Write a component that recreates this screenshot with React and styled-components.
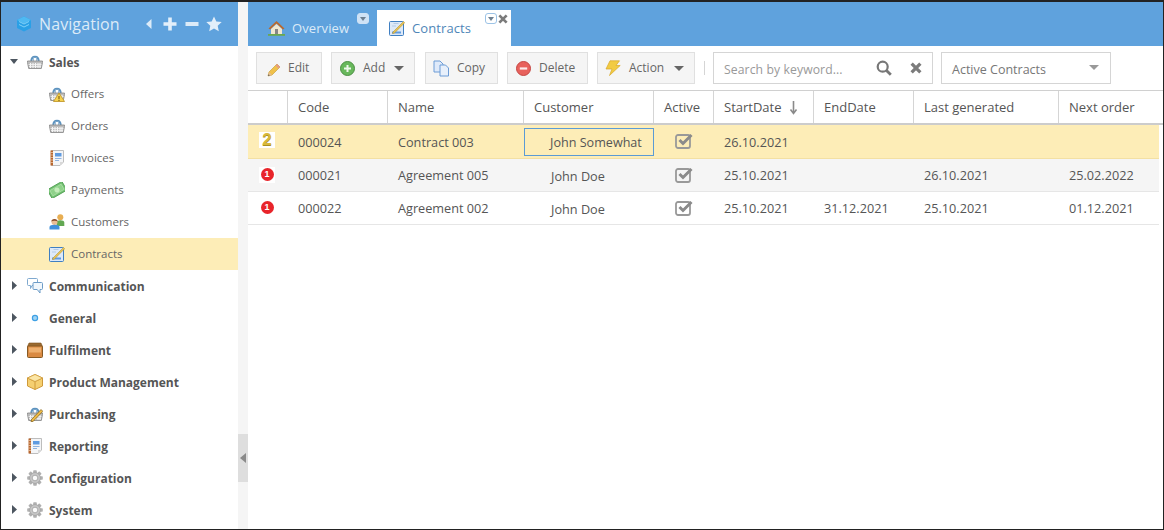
import React from "react";
import styled, { createGlobalStyle } from "styled-components";

const Global = createGlobalStyle`
  html, body { margin: 0; padding: 0; background: #fff; }
  * { box-sizing: border-box; }
  body { font-family: "Open Sans", "Liberation Sans", sans-serif; font-size: 13px; color: #555; }
`;

const Frame = styled.div`
  width: 1164px; height: 530px; display: flex; overflow: hidden;
  border: 1px solid #222; border-top-width: 2px; background: #fff;
`;
const Sidebar = styled.aside`width: 237px; flex: none; display: flex; flex-direction: column;`;
const NavHeader = styled.header`
  height: 44px; background: #5fa2dd; display: flex; align-items: center; padding-left: 15px;
`;
const NavTitle = styled.div`
  font-size: 16px; color: #dcebf8; margin-left: 7px; width: 106px; letter-spacing: .1px;
`;
const NavTools = styled.div`display: flex; align-items: center;`;
const NavTool = styled.span`display: flex; margin-right: ${p => p.$mr}px;`;
const NavList = styled.nav`display: flex; flex-direction: column;`;
const Item = styled.div`
  height: 32px; display: flex; align-items: center; flex: none;
  padding-left: ${p => (p.$child ? 48 : 9)}px;
  background: ${p => (p.$active ? "#fdedb7" : "transparent")};
  font-weight: ${p => (p.$child ? 400 : 700)};
  color: ${p => (p.$child ? "#666" : "#555")};
  font-size: ${p => (p.$child ? 11.5 : 12)}px;
`;
const ItemLabel = styled.span`margin-top: ${p => (p.$child ? -1 : 0)}px;`;
const Toggle = styled.span`
  width: 17px; flex: none; display: flex; justify-content: ${p => (p.$open ? "flex-start" : "center")};
  padding-right: ${p => (p.$open ? 0 : 8)}px; margin-top: -1px;
`;
const IconSlot = styled.span`width: 16px; height: 16px; flex: none; display: flex; margin-right: 6px;`;
const Gutter = styled.div`
  width: 10px; flex: none; background: #f5f5f5; display: flex; flex-direction: column; justify-content: flex-end; padding-bottom: 47px;
`;
const Handle = styled.div`
  height: 48px; background: #dedede; display: flex; align-items: center; justify-content: center;
`;
const Main = styled.main`flex: 1; min-width: 0; display: flex; flex-direction: column;`;
const TabBar = styled.div`
  height: 44px; background: #5fa2dd; display: flex; align-items: flex-end; padding-left: 5px;
`;
const Tab = styled.div`
  position: relative; height: 36px; display: flex; align-items: center; flex: none;
  width: ${p => p.$w}px; padding-left: ${p => p.$pad}px;
  background: ${p => (p.$active ? "#fff" : "transparent")};
  color: ${p => (p.$active ? "#4f86b8" : "#dcebf8")};
  font-size: 13px; letter-spacing: .1px;
  svg.tabicon { margin-right: 7px; }
`;
const TabMenu = styled.span`
  position: absolute; top: 3px; right: ${p => p.$right}px; width: 12px; height: 11px; border-radius: 3px;
  background: ${p => (p.$active ? "#fff" : "#cfe2f5")};
  border: 1px solid ${p => (p.$active ? "#9cc3e6" : "#cfe2f5")};
  display: flex; align-items: center; justify-content: center;
  &::after { content: ""; border: 3px solid transparent; border-top: 4px solid #6d7f90; border-bottom: 0; }
`;
const TabClose = styled.span`position: absolute; top: 4px; right: 3px; display: flex;`;
const Toolbar = styled.div`
  height: 44px; display: flex; align-items: center; padding: 0 0 0 8px; flex: none;
`;
const Btn = styled.div`
  height: 32px; width: ${p => p.$w}px; margin-right: ${p => p.$mr}px; flex: none;
  background: #f5f5f5; border: 1px solid #e0e0e0;
  display: flex; align-items: center; padding-left: ${p => p.$pl || 9}px; color: #666; font-size: 12px;
`;
const BtnLabel = styled.span`margin-left: ${p => p.$ml}px; margin-top: -2px;`;
const BtnIcon = styled.span`display: flex; margin-top: ${p => p.$mt || 0}px;`;
const Caret = styled.span`
  margin-left: ${p => p.$ml || 9}px; border: 5px solid transparent;
  border-top: 5px solid ${p => p.$c || "#666"}; border-bottom: 0;
`;
const Sep = styled.span`width: 1px; height: 14px; background: #d5d5d5; margin-right: 8px; flex: none;`;
const Search = styled.div`
  width: 220px; height: 32px; border: 1px solid #d5d5d5; margin-right: 8px; display: flex; align-items: center;
  padding-left: 10px; color: #999; font-size: 12.2px; letter-spacing: .1px; flex: none;
`;
const SearchText = styled.span`width: 152px; margin-top: 2px;`;
const SearchGap = styled.span`width: 18px; flex: none;`;
const Select = styled.div`
  width: 170px; height: 32px; border: 1px solid #d5d5d5; display: flex; align-items: center; justify-content: space-between;
  padding: 2px 11px 0 10px; color: #777; font-size: 12.5px; flex: none;
`;
const SelectCaret = styled(Caret)`margin-top: -3px;`;
const cols = "40px 100px 136px 130px 60px 100px 100px 145px 100px";
const HeadWrap = styled.div`
  height: 35px; border-top: 1px solid #d0d0d0; border-bottom: 2px solid #ccc; flex: none;
`;
const Row = styled.div`display: grid; grid-template-columns: ${cols}; align-items: stretch;`;
const HeadRow = styled(Row)`height: 32px;`;
const HeadCell = styled.div`
  display: flex; align-items: center; padding-left: 10px; color: #555; font-size: 13px;
  border-right: ${p => (p.$last ? 0 : "1px solid #d5d5d5")};
`;
const SortMark = styled.span`display: flex; margin-left: 7px;`;
const DataRow = styled(Row)`
  height: ${p => p.$h}px; width: 911px; flex: none; background: ${p => p.$bg};
  border-bottom: 1px solid ${p => p.$line};
`;
const Cell = styled.div`
  display: flex; align-items: center; padding-left: ${p => p.$pl ?? 10}px;
  padding-bottom: ${p => p.$pb ?? 1}px; padding-top: ${p => p.$pt ?? 0}px; font-size: 12.7px; color: #555;
  justify-content: ${p => (p.$center ? "center" : "flex-start")};
  white-space: nowrap;
`;
const FocusCell = styled.div`
  align-self: center; height: 28px; width: 130px; border: 1px solid #5b9bd5;
  display: flex; align-items: center; padding: 1px 0 0 25px; font-size: 12.6px; color: #555; white-space: nowrap;
`;
const BadgeBox = styled.span`
  width: 16px; height: 16px; margin-left: 11px; margin-top: ${p => p.$mt}px; background: #fff; display: flex; align-items: center; justify-content: center;
`;
const RedBadge = styled.span`
  width: 13px; height: 13px; border-radius: 50%; background: #e8242a; color: #fff;
  font: 700 9px/13px "Liberation Sans", sans-serif; text-align: center;
`;
const YellowBadge = styled.span`
  font: 700 17px/16px "Liberation Sans", sans-serif; color: #d8b93a; text-shadow: 0 1px 0 #a88f1f;
`;
const Rows = styled.div`display: flex; flex-direction: column;`;

const Svg = ({ children, w = 16, h = 16, vb, className }) => (
  <svg width={w} height={h} viewBox={vb || `0 0 ${w} ${h}`} className={className} style={{ flex: "none", display: "block" }}>{children}</svg>
);

const Cube = () => (
  <Svg>
    <path d="M8 0.500l7 3.500v8l-7 3.500-7-3.500V4z" fill="#2aa0e6" />
    <path d="M8 0.500l7 3.500-7 3.500L1 4z" fill="#4fb9f2" />
    <path d="M3 8.500l5 2.500 5-2.500M3 5.500l5 2.500 5-2.500" stroke="#7fd0f8" fill="none" strokeWidth="1" />
  </Svg>
);
const NavLeft = () => <Svg w={7} h={12}><path d="M6.500 1v10L1 6z" fill="#dcebf8" /></Svg>;
const NavPlus = () => <Svg w={14} h={14}><path d="M5.200 0.500h3.600v4.700h4.700v3.600H8.800v4.700H5.200V8.800H.5V5.200h4.700z" fill="#e3effa" /></Svg>;
const NavMinus = () => <Svg w={14} h={14}><rect x=".5" y="5" width="13" height="4" fill="#dcebf8" /></Svg>;
const NavStar = () => <Svg w={16} h={16}><path d="M8 .5l2.300 5 5.400.6-4 3.700 1.100 5.400L8 12.500l-4.800 2.700 1.100-5.400-4-3.700 5.400-.6z" fill="#e3effa" /></Svg>;

const ArrowRight = () => <Svg w={5} h={9}><path d="M0 0l5 4.500L0 9z" fill="#4d5660" /></Svg>;
const ArrowDown = () => <Svg w={8} h={5}><path d="M0 0h8L4 5z" fill="#4d5660" /></Svg>;

const Basket = () => (
  <g>
    <path d="M4.300 7.500C4.300 1 11.700 1 11.700 7.500" fill="none" stroke="#5d93bf" strokeWidth="2" />
    <path d="M6.500 7V3.500M9.500 7V3.500" stroke="#9dbdd8" strokeWidth="1" />
    <path d="M.5 7h15v1.500l-1.200 6H1.700L.5 8.500z" fill="#bdbdbd" stroke="#858585" strokeWidth=".8" />
    <path d="M3.500 9v5M6 9v5M8.500 9v5M11 9v5M13 9v5" stroke="#fff" strokeWidth=".9" />
    <path d="M1.500 10.500h13M2 12.500h12" stroke="#f2f2f2" strokeWidth=".8" />
  </g>
);
const BasketIcon = () => <Svg><Basket /></Svg>;
const BasketWarn = () => (
  <Svg>
    <Basket />
    <path d="M10 7l5.500 8.500H4.500z" fill="#f6d24d" stroke="#c39a2f" strokeWidth=".9" />
    <path d="M10 10v3M10 13.800v1.200" stroke="#7a5a10" strokeWidth="1.100" />
  </Svg>
);
const Notebook = () => (
  <Svg>
    <path d="M2.500 .5H14.500V12l-3.500 3.500H2.500z" fill="#f4f5f7" stroke="#bdbdbd" />
    <path d="M14.500 12L11 15.500V12z" fill="#d8d8d8" />
    <rect x="1.500" y=".5" width="2.500" height="15" fill="#b8672f" />
    <path d="M1.500 2.500h2.500M1.500 5h2.500M1.500 7.500h2.500M1.500 10h2.500M1.500 12.500h2.500" stroke="#eed1b8" strokeWidth=".7" />
    <path d="M6 3h6.500v3.500H6z" fill="#5f9be0" />
    <path d="M6 8.500h6.500M6 10.500h4" stroke="#8fb3e0" />
  </Svg>
);
const Money = () => (
  <Svg>
    <g transform="rotate(-30 8 8)">
      <rect x="-.5" y="3" width="17" height="10" fill="#74c173" stroke="#4f9d52" strokeWidth=".8" />
      <rect x="1.500" y="5" width="13" height="6" fill="#8fd18a" stroke="#b9e8b2" strokeWidth=".6" />
      <circle cx="8" cy="8" r="2.500" fill="#c4ecba" />
    </g>
  </Svg>
);
const People = () => (
  <Svg>
    <circle cx="11.300" cy="3.300" r="3" fill="#e8ae52" />
    <path d="M7.500 12V8.500c0-1.500 1.500-2.300 3.800-2.300s4 .8 4 2.300V12z" fill="#62a852" />
    <circle cx="5.500" cy="8" r="3" fill="#e9bd95" />
    <path d="M2.300 7.500c0-3.500 6.400-3.500 6.400 0-1.500-1-4.900-1-6.400 0z" fill="#8a4f2c" />
    <path d="M.5 15.500v-2.500c0-1.500 2.200-2.300 5-2.300s5 .8 5 2.300v2.500z" fill="#3f8fdc" />
  </Svg>
);
const ContractIco = ({ className }) => (
  <Svg className={className}>
    <rect x=".5" y="1.500" width="14" height="14" rx="1" fill="#dde9f8" stroke="#3f7fc2" />
    <path d="M3 12.500h9" stroke="#5f9be0" strokeWidth="2" />
    <path d="M4.500 3.500h5M3 6h4" stroke="#b4cbe6" />
    <path d="M4 12L14.500 1.500l1.200 1.200L5.300 13.200 3.500 13.500z" fill="#eac553" stroke="#a8862a" strokeWidth=".5" />
  </Svg>
);
const Chat = () => (
  <Svg>
    <path d="M1.500 .5h8a1 1 0 011 1v5a1 1 0 01-1 1H5l-1.500 3V7.500h-2a1 1 0 01-1-1v-5a1 1 0 011-1z" fill="#fff" stroke="#7fa9cf" />
    <path d="M7 4.500h7.500a1 1 0 011 1v5a1 1 0 01-1 1H13v3.500l-2.800-3.500H7a1 1 0 01-1-1v-5a1 1 0 011-1z" fill="#f1f7fc" stroke="#6d9cc7" />
  </Svg>
);
const DotIco = () => <Svg><circle cx="8" cy="8" r="2.600" fill="#9fd4f5" stroke="#3ea0e4" strokeWidth="1.200" /></Svg>;
const Crate = () => (
  <Svg>
    <path d="M2 1h12l1.500 3.500H.5z" fill="#9a6a30" stroke="#7d5220" strokeWidth=".6" />
    <rect x=".5" y="4" width="15" height="11.500" rx="1" fill="#d98a42" stroke="#875a24" />
    <rect x="2" y="5.500" width="12" height="5" fill="#eeb06f" />
  </Svg>
);
const Pkg = () => (
  <Svg>
    <path d="M8 .5L15.500 4v8L8 15.500.5 12V4z" fill="#f5cf70" stroke="#cf9a3a" />
    <path d="M8 7.500L15.500 4M8 7.500L.5 4M8 7.500v8" stroke="#cf9a3a" fill="none" />
    <path d="M8 .5l7.500 3.500L8 7.500.5 4z" fill="#fbe6a6" stroke="#cf9a3a" strokeWidth=".7" />
  </Svg>
);
const BasketPen = () => (
  <Svg>
    <Basket />
    <path d="M4.500 13.500L14 3.500l1.800 1.800-9.500 10-2.300.6z" fill="#eeba44" stroke="#7a5c1c" strokeWidth=".7" />
  </Svg>
);
const Gear = () => (
  <Svg>
    <g fill="#b0b0b0">
      {[0, 45, 90, 135].map(a => (
        <rect key={a} x="6.200" y=".2" width="3.600" height="15.600" rx=".8" transform={`rotate(${a} 8 8)`} />
      ))}
    </g>
    <circle cx="8" cy="8" r="5.400" fill="#c6c6c6" stroke="#9a9a9a" strokeWidth=".6" />
    <circle cx="8" cy="8" r="2.800" fill="#fafafa" stroke="#a0a0a0" strokeWidth=".8" />
  </Svg>
);
const Home = () => (
  <Svg w={17} h={16} className="tabicon">
    <path d="M.5 8.500L8.500 1l8 7.500-1.700 1L8.500 3.500 2.200 9.500z" fill="#b9692f" />
    <path d="M3 9l5.500-5L14 9v5H3z" fill="#f0e7d0" />
    <rect x="7" y="9" width="3" height="5" fill="#858585" />
    <rect x="0" y="14" width="17" height="1.800" fill="#6aa84f" />
  </Svg>
);
const PencilIco = () => (
  <Svg w={14} h={14}>
    <path d="M1 13l1-4 8-8 3 3-8 8z" fill="#f0c14b" stroke="#c49a2c" strokeWidth=".6" />
    <path d="M1 13l1-4 3 3z" fill="#e5bd93" />
    <path d="M1 13l.5-1.800 1.300 1.300z" fill="#555" />
    <path d="M10 1l3 3-1.400 1.400-3-3z" fill="#e39a8a" />
  </Svg>
);
const PlusCircle = () => (
  <Svg w={15} h={15}>
    <circle cx="7.500" cy="7.500" r="7" fill="#68b85c" stroke="#4b8f43" />
    <path d="M7.500 4v7M4 7.500h7" stroke="#eef8ec" strokeWidth="2" />
  </Svg>
);
const MinusCircle = () => (
  <Svg w={15} h={15}>
    <circle cx="7.500" cy="7.500" r="7" fill="#e8615c" stroke="#c44743" />
    <path d="M3.800 7.500h7.400" stroke="#fbecec" strokeWidth="2.200" />
  </Svg>
);
const CopyIco = () => (
  <Svg w={17} h={17}>
    <path d="M1 1h6l3 3v8H1z" fill="#dfeafa" stroke="#6d9cd6" />
    <path d="M7 5h5.500l3 3v8H7z" fill="#e8f0fb" stroke="#6d9cd6" />
  </Svg>
);
const Bolt = () => (
  <Svg w={16} h={16}>
    <path d="M5 0.800h9.500L11 5.500h4.200L4.500 15.500 7 9H1z" fill="#f2cb43" stroke="#d8a82a" strokeWidth=".7" />
  </Svg>
);
const SearchIco = () => (
  <Svg w={16} h={16}>
    <circle cx="6.700" cy="6.700" r="5" fill="none" stroke="#777" strokeWidth="2.200" />
    <path d="M10.500 10.500l4.300 4.300" stroke="#777" strokeWidth="2.800" />
  </Svg>
);
const CloseIco = ({ size = 11, c = "#7b7b7b" }) => (
  <Svg w={size} h={size} vb="0 0 11 11">
    <path d="M1.500 1.500l8 8M9.500 1.500l-8 8" stroke={c} strokeWidth="3" />
  </Svg>
);
const SortDown = () => (
  <Svg w={9} h={15}>
    <path d="M4.500 1v12M1.500 9.500l3 4 3-4" stroke="#8a8a8a" strokeWidth="1.600" fill="none" />
  </Svg>
);
const Check = () => (
  <Svg w={18} h={16}>
    <rect x="1" y="2" width="14" height="13" rx="2" fill="none" stroke="#999" strokeWidth="1.800" />
    <path d="M4.500 7l3.500 3.500L16.500 2" fill="none" stroke="#8b8b8b" strokeWidth="3" />
  </Svg>
);
const HandleArrow = () => <Svg w={6} h={10}><path d="M6 0v10L0 5z" fill="#8a8a8a" /></Svg>;

const nav = [
  { t: "Sales", I: BasketIcon, open: true },
  { t: "Offers", I: BasketWarn, child: true },
  { t: "Orders", I: BasketIcon, child: true },
  { t: "Invoices", I: Notebook, child: true },
  { t: "Payments", I: Money, child: true },
  { t: "Customers", I: People, child: true },
  { t: "Contracts", I: ContractIco, child: true, active: true },
  { t: "Communication", I: Chat },
  { t: "General", I: DotIco },
  { t: "Fulfilment", I: Crate },
  { t: "Product Management", I: Pkg },
  { t: "Purchasing", I: BasketPen },
  { t: "Reporting", I: Notebook },
  { t: "Configuration", I: Gear },
  { t: "System", I: Gear },
];

const heads = ["", "Code", "Name", "Customer", "Active", "StartDate", "EndDate", "Last generated", "Next order"];

const rows = [
  { badge: 2, code: "000024", name: "Contract 003", cust: "John Somewhat", start: "26.10.2021", end: "", last: "", next: "", bg: "#fdedb7", line: "#f3e0a3", h: 34, pb: 0, focus: true },
  { badge: 1, code: "000021", name: "Agreement 005", cust: "John Doe", start: "25.10.2021", end: "", last: "26.10.2021", next: "25.02.2022", bg: "#f5f5f5", line: "#e6e6e6", h: 33, pb: 1 },
  { badge: 1, code: "000022", name: "Agreement 002", cust: "John Doe", start: "25.10.2021", end: "31.12.2021", last: "25.10.2021", next: "01.12.2021", bg: "#fff", line: "#e6e6e6", h: 33, pb: 1 },
];

export default function App() {
  return (
    <>
      <Global />
      <Frame>
        <Sidebar>
          <NavHeader>
            <Cube />
            <NavTitle>Navigation</NavTitle>
            <NavTools>
              <NavTool $mr={11}><NavLeft /></NavTool>
              <NavTool $mr={8}><NavPlus /></NavTool>
              <NavTool $mr={7}><NavMinus /></NavTool>
              <NavTool $mr={0}><NavStar /></NavTool>
            </NavTools>
          </NavHeader>
          <NavList>
            {nav.map(({ t, I, child, open, active }) => (
              <Item key={t} $child={child} $active={active}>
                {!child && <Toggle $open={open}>{open ? <ArrowDown /> : <ArrowRight />}</Toggle>}
                <IconSlot><I /></IconSlot>
                <ItemLabel $child={child}>{t}</ItemLabel>
              </Item>
            ))}
          </NavList>
        </Sidebar>
        <Gutter>
          <Handle><HandleArrow /></Handle>
        </Gutter>
        <Main>
          <TabBar>
            <Tab $w={124} $pad={15}>
              <Home />
              Overview
              <TabMenu $right={8} />
            </Tab>
            <Tab $w={134} $pad={12} $active>
              <ContractIco className="tabicon" />
              Contracts
              <TabMenu $right={14} $active />
              <TabClose><CloseIco size={10} /></TabClose>
            </Tab>
          </TabBar>
          <Toolbar>
            <Btn $w={66} $mr={9} $pl={10}><BtnIcon $mt={3}><PencilIco /></BtnIcon><BtnLabel $ml={7}>Edit</BtnLabel></Btn>
            <Btn $w={84} $mr={10} $pl={8}><BtnIcon><PlusCircle /></BtnIcon><BtnLabel $ml={8}>Add</BtnLabel><Caret /></Btn>
            <Btn $w={73} $mr={9} $pl={7}><BtnIcon><CopyIco /></BtnIcon><BtnLabel $ml={7}>Copy</BtnLabel></Btn>
            <Btn $w={81} $mr={9} $pl={8}><BtnIcon><MinusCircle /></BtnIcon><BtnLabel $ml={8}>Delete</BtnLabel></Btn>
            <Btn $w={98} $mr={9} $pl={7}><BtnIcon><Bolt /></BtnIcon><BtnLabel $ml={8}>Action</BtnLabel><Caret $ml={10} /></Btn>
            <Sep />
            <Search>
              <SearchText>Search by keyword...</SearchText>
              <SearchIco />
              <SearchGap />
              <CloseIco size={12} />
            </Search>
            <Select>Active Contracts<SelectCaret $c="#999" /></Select>
          </Toolbar>
          <HeadWrap>
            <HeadRow>
              {heads.map((h, i) => (
                <HeadCell key={i} $last={i === heads.length - 1}>
                  {h}
                  {h === "StartDate" && <SortMark><SortDown /></SortMark>}
                </HeadCell>
              ))}
            </HeadRow>
          </HeadWrap>
          <Rows>
            {rows.map(r => (
              <DataRow key={r.code} $bg={r.bg} $line={r.line} $h={r.h}>
                <Cell $pl={0}>
                  <BadgeBox $mt={r.badge === 2 ? -2 : 0}>{r.badge === 2 ? <YellowBadge>2</YellowBadge> : <RedBadge>1</RedBadge>}</BadgeBox>
                </Cell>
                <Cell $pb={r.pb}>{r.code}</Cell>
                <Cell $pb={r.pb}>{r.name}</Cell>
                {r.focus ? <FocusCell>{r.cust}</FocusCell> : <Cell $pl={27} $pb={0} $pt={1}>{r.cust}</Cell>}
                <Cell $pl={0} $center><Check /></Cell>
                <Cell $pb={r.pb}>{r.start}</Cell>
                <Cell $pb={r.pb}>{r.end}</Cell>
                <Cell $pb={r.pb}>{r.last}</Cell>
                <Cell $pb={r.pb}>{r.next}</Cell>
              </DataRow>
            ))}
          </Rows>
        </Main>
      </Frame>
    </>
  );
}
